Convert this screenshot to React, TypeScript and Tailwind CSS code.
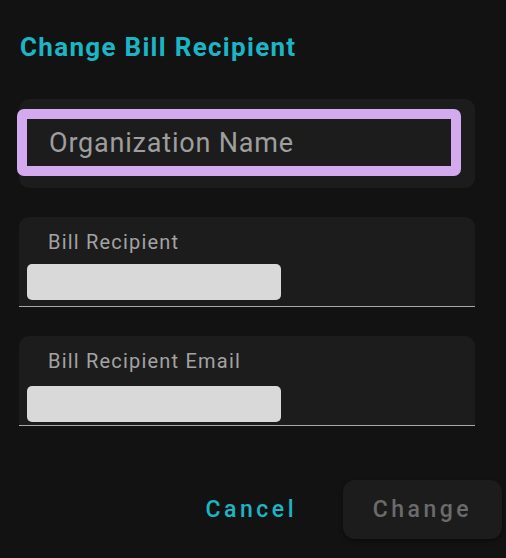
import React from "react";

const FilledField = ({ label, lower }: { label: string; lower?: boolean }) => {
	return (
		<div className="w-[456px] h-[90px] rounded-t-[10px] bg-[#1c1c1c] border-b border-[#a8a8a8] flex flex-col">
			<div className="pl-[29px] pt-[13px] text-[20px] leading-[24px] tracking-[1.2px] text-[#a3a3a3]">
				{label}
			</div>
			<div
				className={
					"ml-[8px] w-[254px] h-[36px] rounded-[5px] bg-[#d9d9d9] " +
					(lower ? "mt-[13px]" : "mt-[10px]")
				}
			></div>
		</div>
	);
};

export default function App() {
	return (
		<div
			className="w-[506px] h-[558px] bg-[#121212] overflow-hidden"
			style={{ fontFamily: "Roboto, 'Liberation Sans', sans-serif" }}
		>
			<h2 className="pl-[20px] pt-[29px] text-[26px] leading-[36px] font-bold tracking-[1.3px] text-[#1bb6c5]">
				Change Bill Recipient
			</h2>
			<div className="mt-[34px] ml-[19px] flex flex-col">
				{/* focused field */}
				<div className="w-[456px] h-[89px] rounded-[10px] bg-[#1c1c1c] pt-[10px]">
					<div className="-ml-[2px] w-[444px] h-[67px] rounded-[7px] border-[10px] border-[#d4aaef] bg-[#1c1c1c] flex items-center pl-[22px]">
						<span className="text-[27px] leading-[32px] tracking-[0.8px] text-[#9e9e9e]">
							Organization Name
						</span>
					</div>
				</div>
				<div className="mt-[29px]">
					<FilledField label="Bill Recipient" />
				</div>
				<div className="mt-[29px]">
					<FilledField label="Bill Recipient Email" lower />
				</div>
			</div>
			<div className="mt-[54px] flex items-center justify-end pr-[4px] gap-[46px]">
				<button className="pt-[2px] text-[23px] font-medium tracking-[3.5px] text-[#1bb6c5]">
					Cancel
				</button>
				<button className="w-[159px] h-[59px] pt-[2px] rounded-[12px] bg-[#1c1c1c] text-[23px] font-medium tracking-[3.5px] text-[#6b6b6b] shadow-[0_2px_4px_rgba(0,0,0,0.4)]">
					Change
				</button>
			</div>
		</div>
	);
}
